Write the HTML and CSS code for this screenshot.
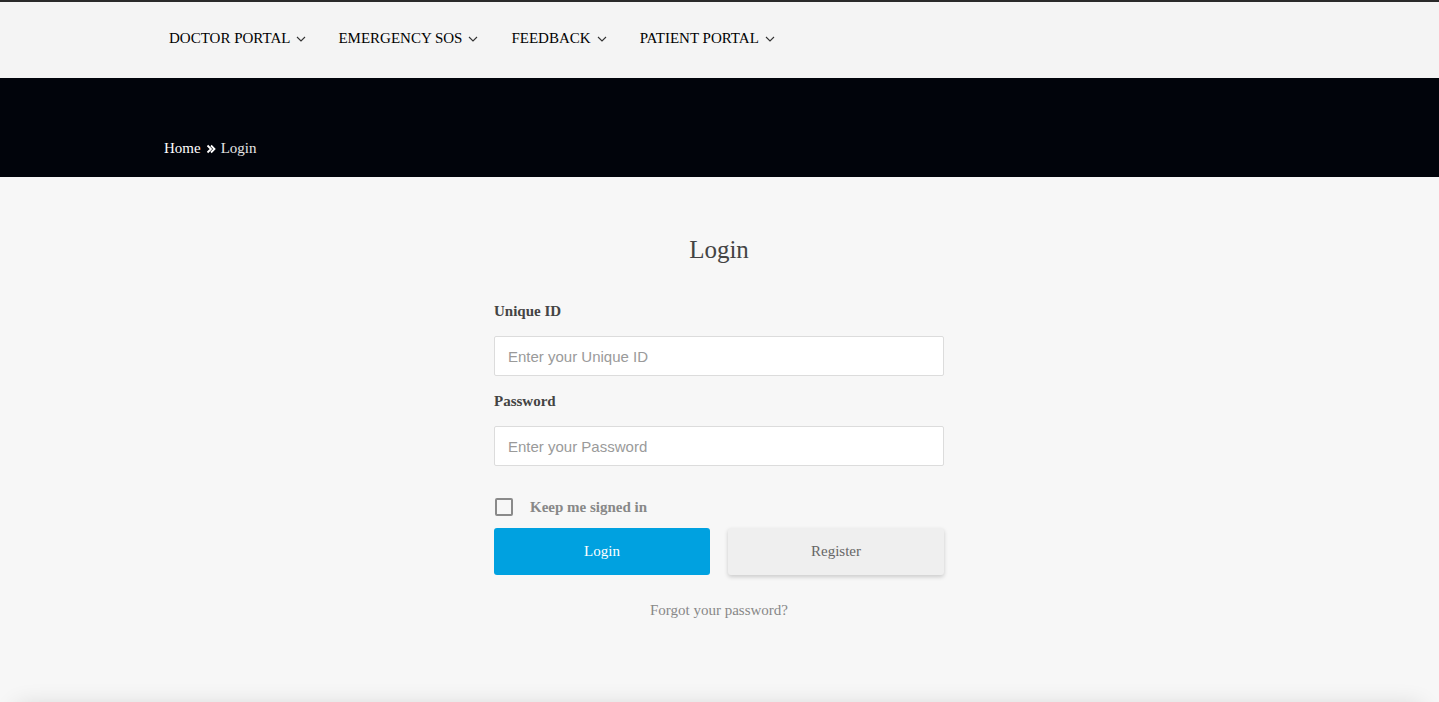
FILE: index.html
```html
<!DOCTYPE html>
<html lang="en">
<head>
<meta charset="utf-8">
<title>Login</title>
<link rel="stylesheet" href="styles.css">
</head>
<body>
<header class="topbar">
  <nav class="nav">
    <a class="nav-item" href="#">DOCTOR PORTAL <svg class="chev" viewBox="0 0 10 6" width="10" height="6"><path d="M1 1l4 4 4-4" fill="none" stroke="#333" stroke-width="1.1"/></svg></a>
    <a class="nav-item" href="#">EMERGENCY SOS <svg class="chev" viewBox="0 0 10 6" width="10" height="6"><path d="M1 1l4 4 4-4" fill="none" stroke="#333" stroke-width="1.1"/></svg></a>
    <a class="nav-item" href="#">FEEDBACK <svg class="chev" viewBox="0 0 10 6" width="10" height="6"><path d="M1 1l4 4 4-4" fill="none" stroke="#333" stroke-width="1.1"/></svg></a>
    <a class="nav-item" href="#">PATIENT PORTAL <svg class="chev" viewBox="0 0 10 6" width="10" height="6"><path d="M1 1l4 4 4-4" fill="none" stroke="#333" stroke-width="1.1"/></svg></a>
  </nav>
</header>
<section class="banner">
  <div class="crumbs">
    <a class="crumb-home" href="#">Home</a>
    <svg class="dchev" viewBox="0 0 10 10" width="10" height="10"><path d="M1.5 1.5l3.5 3.5-3.5 3.5M5 1.5l3.5 3.5-3.5 3.5" fill="none" stroke="#fff" stroke-width="1.8"/></svg>
    <span class="crumb-current">Login</span>
  </div>
</section>
<main class="main">
  <h1 class="title">Login</h1>
  <form class="form">
    <label class="label" for="uid">Unique ID</label>
    <input class="input" id="uid" type="text" placeholder="Enter your Unique ID">
    <label class="label" for="pwd">Password</label>
    <input class="input" id="pwd" type="password" placeholder="Enter your Password">
    <label class="check">
      <span class="box"></span>
      <span class="check-text">Keep me signed in</span>
    </label>
    <div class="buttons">
      <button class="btn btn-primary" type="button">Login</button>
      <button class="btn btn-secondary" type="button">Register</button>
    </div>
    <a class="forgot" href="#">Forgot your password?</a>
  </form>
  <div class="footer-card"></div>
</main>
</body>
</html>
```
FILE: styles.css
```css
* { box-sizing: border-box; }
html, body { margin: 0; padding: 0; }
body {
  background: #f7f7f7;
  font-family: "Liberation Serif", "Times New Roman", serif;
  overflow: hidden;
  height: 702px;
}
.topbar {
  border-top: 2px solid #2a2a2a;
  background: #f4f4f4;
  height: 78px;
}
.nav {
  display: flex;
  align-items: center;
  height: 72px;
  padding-left: 169px;
  gap: 32px;
}
.nav-item {
  color: #000;
  text-decoration: none;
  font-size: 15px;
  display: flex;
  align-items: center;
  gap: 6px;
}
.nav-item:nth-child(3) { margin-left: 1px; }
.nav-item:nth-child(4) { margin-left: 1px; }
.chev { margin-top: 1px; }
.banner {
  background: #01040b;
  height: 99px;
  padding: 62px 0 0 164px;
}
.crumbs {
  display: flex;
  align-items: center;
  gap: 5px;
  font-size: 15px;
}
.crumb-home { color: #fff; text-decoration: none; }
.crumb-current { color: #e6e6e6; }
.main {
  display: flex;
  flex-direction: column;
  align-items: center;
  padding-top: 58px;
  padding-right: 1px;
}
.title {
  margin: 0;
  font-weight: normal;
  font-size: 25px;
  color: #444;
  line-height: 30px;
}
.form {
  width: 450px;
  display: flex;
  flex-direction: column;
  margin-top: 37px;
}
.label {
  font-weight: bold;
  font-size: 15px;
  color: #444;
  line-height: 18px;
  margin-bottom: 16px;
}
.input {
  height: 40px;
  border: 1px solid #dcdcdc;
  border-radius: 2px;
  background: #fff;
  padding: 0 13px;
  font-family: "Liberation Sans", Arial, sans-serif;
  font-size: 15px;
  color: #333;
  margin-bottom: 16px;
  outline: none;
}
.input::placeholder { color: #9a9a9a; }
.check {
  display: flex;
  align-items: center;
  gap: 17px;
  margin-top: 16px;
  padding-left: 1px;
}
.box {
  width: 18px;
  height: 18px;
  border: 2px solid #8a8a8a;
  border-radius: 2px;
  background: #f7f7f7;
}
.check-text {
  font-weight: bold;
  font-size: 15px;
  color: #888;
}
.buttons {
  display: flex;
  gap: 18px;
  margin-top: 12px;
}
.btn {
  flex: 1;
  height: 47px;
  border: none;
  border-radius: 3px;
  font-family: "Liberation Serif", "Times New Roman", serif;
  font-size: 15px;
}
.btn-primary {
  background: #00a1e0;
  color: #fff;
}
.btn-secondary {
  background: #efefef;
  color: #666;
  box-shadow: 0 2px 4px rgba(0,0,0,0.18);
}
.forgot {
  align-self: center;
  margin-top: 27px;
  font-size: 15px;
  color: #888;
  text-decoration: none;
}
.footer-card {
  margin-top: 90px;
  width: 1400px;
  height: 40px;
  background: #f7f7f7;
  box-shadow: 0 0 24px 2px rgba(0,0,0,0.16);
}
```
